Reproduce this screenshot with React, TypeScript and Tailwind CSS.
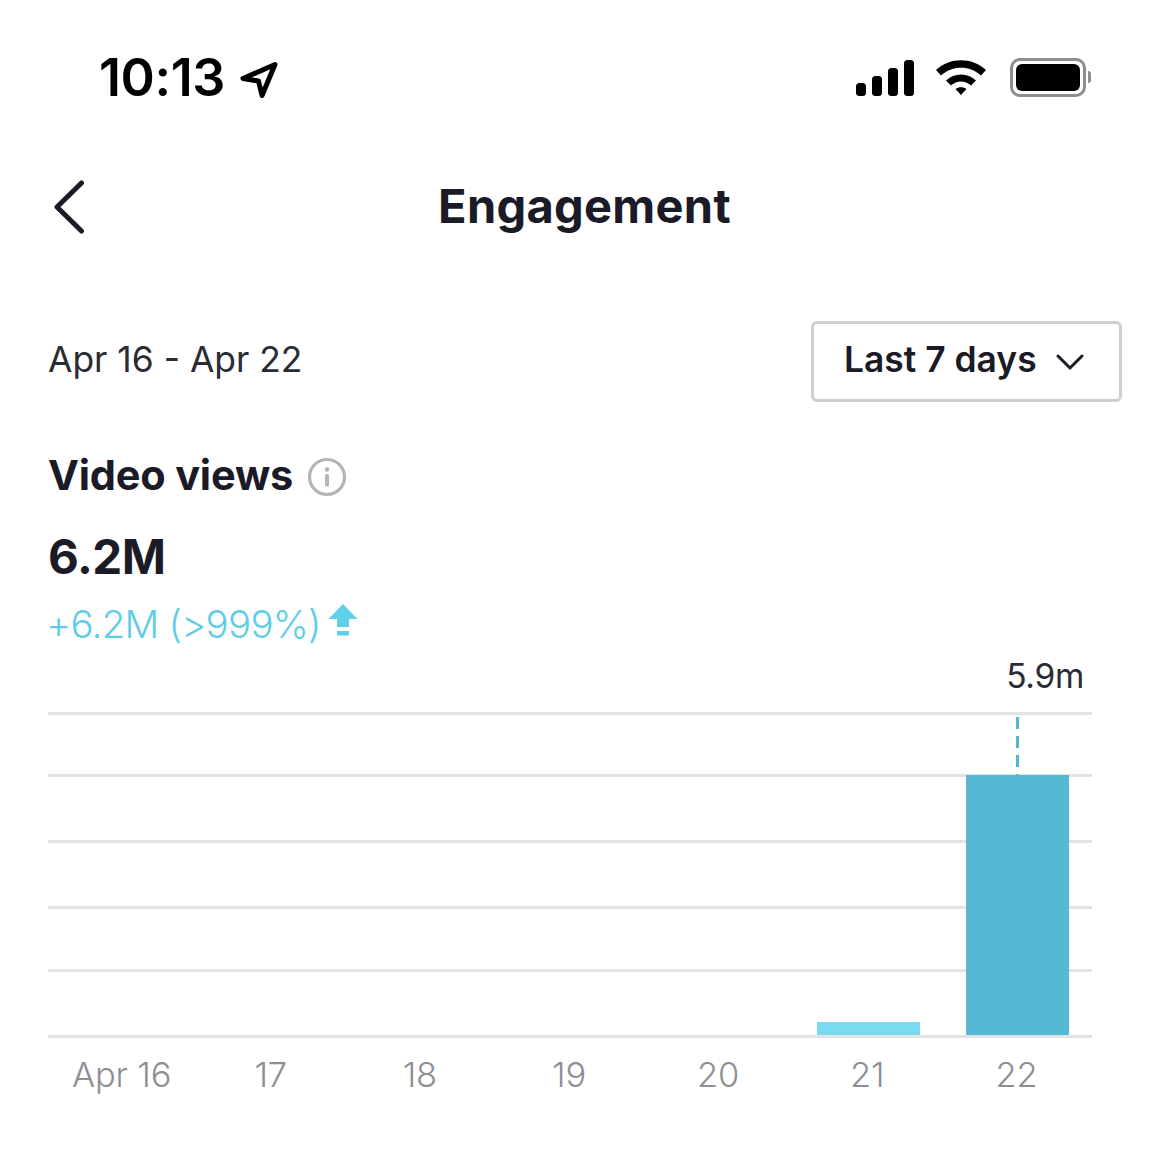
import React from "react";

const days = ["Apr 16", "17", "18", "19", "20", "21", "22"];
const lines = ["", "mt-[59px]", "mt-[63px]", "mt-[63px]", "mt-[60px]", "mt-[63px]"];

function StatusBar() {
  return (
    <div className="flex h-[118px] items-start justify-between pl-[99px] pr-[78px] pt-[50px]">
      <div className="flex items-center gap-[14px]">
        <span className="font-['Inter',sans-serif] text-[52px] font-semibold leading-[56px] tracking-[-0.4px] text-black">10:13</span>
        <svg width="40" height="40" viewBox="0 0 40 40" fill="none" className="mt-[1px]">
          <path d="M36 5.5 L4 19.5 L19.5 22 L23 36.5 Z" stroke="#000" strokeWidth="5" strokeLinejoin="round" />
        </svg>
      </div>
      <div className="mt-[7px] flex items-center gap-[21px]">
        <svg width="58" height="38" viewBox="0 0 58 38" className="mt-[2px]">
          <rect x="0" y="24" width="10" height="13" rx="3.5" fill="#000" />
          <rect x="16" y="17" width="10" height="20" rx="3.5" fill="#000" />
          <rect x="32" y="9" width="10" height="28" rx="3.5" fill="#000" />
          <rect x="48" y="1" width="10" height="36" rx="3.5" fill="#000" />
        </svg>
        <svg width="52" height="38" viewBox="0 0 52 38">
          <path d="M1 12 C15 -1 37 -1 51 12 L46 17.5 C35 7 17 7 6 17.5 Z" fill="#000" />
          <path d="M11 22.5 C19 14.5 33 14.5 41 22.5 L36 27.5 C30 22 22 22 16 27.5 Z" fill="#000" />
          <path d="M20.5 31 C23.5 28.5 28.5 28.5 31.5 31 L26 37 Z" fill="#000" />
        </svg>
        <div className="ml-[2px] flex items-center">
          <div className="h-[39px] w-[76px] rounded-[10px] border-[3px] border-[#8e8e8e] p-[3px]">
            <div className="h-full w-full rounded-[6px] bg-black" />
          </div>
          <div className="ml-[2px] h-[12px] w-[3px] rounded-r-[3px] bg-[#8e8e8e]" />
        </div>
      </div>
    </div>
  );
}

function Header() {
  return (
    <div className="relative mt-[43px] flex h-[90px] items-center justify-center">
      <svg width="34" height="56" viewBox="0 0 34 56" fill="none" className="absolute left-[53px] top-[19px]">
        <path d="M28.5 3 L4 27 L28.5 51" stroke="#1a1b26" strokeWidth="5" strokeLinecap="round" strokeLinejoin="round" />
      </svg>
      <h1 className="mb-[1px] font-['Inter',sans-serif] text-[47px] font-bold leading-[52px] tracking-[0.3px] text-[#1a1b26]">Engagement</h1>
    </div>
  );
}

function DateRow() {
  return (
    <div className="mt-[70px] flex items-center justify-between pl-[48px] pr-[47px]">
      <span className="mb-[4px] font-['Inter',sans-serif] text-[35.4px] leading-[44px] text-[#2a2b34]">Apr 16 - Apr 22</span>
      <div className="flex h-[81px] w-[311px] items-center rounded-[6px] border-[3px] border-[#cfcfd1] pl-[30px]">
        <span className="mb-[3px] font-['Inter',sans-serif] text-[35.4px] font-semibold leading-[44px] text-[#1a1b26]">Last 7 days</span>
        <svg width="28" height="18" viewBox="0 0 28 18" fill="none" className="ml-[19px] mt-[1px]">
          <path d="M2 3 L14 15 L26 3" stroke="#1a1b26" strokeWidth="3" strokeLinecap="round" strokeLinejoin="round" />
        </svg>
      </div>
    </div>
  );
}

function Metric() {
  return (
    <div className="pl-[48px]">
      <div className="mt-[48px] flex items-center gap-[14px]">
        <span className="font-['Inter',sans-serif] text-[41.5px] font-bold leading-[50px] tracking-[-0.2px] text-[#1a1b26]">Video views</span>
        <svg width="40" height="40" viewBox="0 0 40 40" fill="none" className="mt-[3px]">
          <circle cx="20" cy="20" r="17.5" stroke="#b4b4b6" strokeWidth="3.2" />
          <circle cx="20" cy="12.5" r="2.2" fill="#b4b4b6" />
          <rect x="18" y="17" width="4" height="12.5" rx="1.5" fill="#b4b4b6" />
        </svg>
      </div>
      <div className="mt-[29px] font-['Inter',sans-serif] text-[47.5px] font-bold leading-[56px] tracking-[-0.5px] text-[#1a1b26]">6.2M</div>
      <div className="mt-[13px] flex items-start gap-[7px]">
        <span className="ml-[-2px] font-['Inter',sans-serif] text-[38.5px] font-light leading-[52px] tracking-[-0.75px] text-[#5fcde6]">+6.2M (&gt;999%)</span>
        <svg width="30" height="34" viewBox="0 0 30 34" className="mt-[6px]">
          <path d="M15 0 L29.5 15 L21 15 L21 23 L9 23 L9 15 L0.5 15 Z" fill="#5fcfea" />
          <rect x="9" y="27" width="12" height="4.5" fill="#5fcfea" />
        </svg>
      </div>
    </div>
  );
}

function Chart() {
  return (
    <div className="pl-[48px] pr-[77px] font-['Inter',sans-serif]">
      <div className="mt-[6px] flex justify-end pr-[8px]">
        <span className="text-[33.5px] leading-[40px] tracking-[-0.3px] text-[#2a2b34]">5.9m</span>
      </div>
      <div className="relative mt-[16px]">
        <div>
          {lines.map((g, i) => (
            <div key={i} className={`${g} h-[3px] bg-[#e3e3e5]`} />
          ))}
        </div>
        <div className="absolute inset-x-0 bottom-[3px] top-[3px] grid grid-cols-7">
          {days.map((d, i) => (
            <div key={d} className="flex flex-col items-center justify-end">
              {i === 5 && <div className="h-[13px] w-[103px] bg-[#7adaf0]" />}
              {i === 6 && (
                <>
                  <svg width="3" height="58" viewBox="0 0 3 58" className="ml-[1px]">
                    <line x1="1.5" y1="0" x2="1.5" y2="58" stroke="#56b8d2" strokeWidth="3" strokeDasharray="12 7" />
                  </svg>
                  <div className="h-[260px] w-[103px] bg-[#56b8d2]" />
                </>
              )}
            </div>
          ))}
        </div>
      </div>
      <div className="mt-[16px] grid grid-cols-7">
        {days.map((d) => (
          <span key={d} className="mr-[2px] text-center text-[34.5px] font-light leading-[42px] tracking-[-0.2px] text-[#8f8f93]">{d}</span>
        ))}
      </div>
    </div>
  );
}

export default function App() {
  return (
    <div className="h-[1162px] w-[1169px] overflow-hidden bg-white">
      <StatusBar />
      <Header />
      <DateRow />
      <Metric />
      <Chart />
    </div>
  );
}
